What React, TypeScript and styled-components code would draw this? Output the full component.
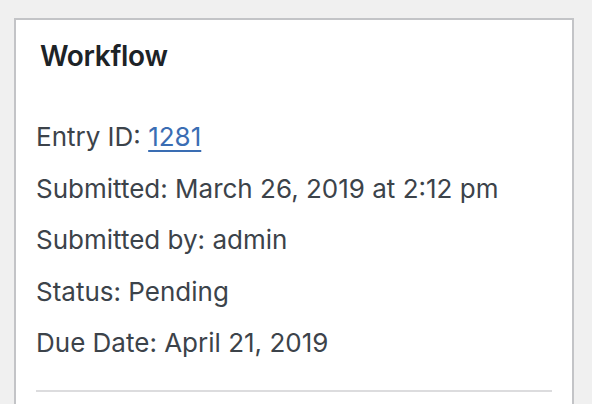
import React from 'react';
import styled, { createGlobalStyle } from 'styled-components';

const GlobalStyle = createGlobalStyle`
  html, body {
    margin: 0;
    padding: 0;
    background: #f0f0f0;
  }
  body {
    font-family: Inter, "Liberation Sans", sans-serif;
    -webkit-font-smoothing: antialiased;
  }
`;

const Page = styled.div`
  padding: 18px 18px 0 14px;
  height: 404px;
  box-sizing: border-box;
  overflow: hidden;
`;

const Postbox = styled.section`
  width: 560px;
  box-sizing: border-box;
  background: #fff;
  border: 2px solid #c3c4c7;
  border-bottom: none;
  height: 400px;
`;

const Heading = styled.h2`
  margin: 0;
  padding: 18px 24px 0;
  font-size: 28px;
  line-height: 36px;
  font-weight: 600;
  letter-spacing: -0.3px;
  color: #1d2327;
`;

const Inside = styled.div`
  padding: 43px 20px 0;
`;

const Details = styled.div`
  display: flex;
  flex-direction: column;
  gap: 11.5px;
`;

const Row = styled.p`
  margin: 0;
  font-size: 26px;
  line-height: 40px;
  color: #3c434a;
`;

const EntryLink = styled.a`
  color: #3a6db3;
  text-decoration: underline;
  text-underline-offset: 4px;
  text-decoration-thickness: 2px;
`;

const Divider = styled.hr`
  margin: 27px 0 0;
  border: none;
  border-top: 2px solid #dcdcde;
`;

const rows = [
  'Submitted: March 26, 2019 at 2:12 pm',
  'Submitted by: admin',
  'Status: Pending',
  'Due Date: April 21, 2019',
];

export default function App() {
  return (
    <>
      <GlobalStyle />
      <Page>
        <Postbox>
          <Heading>Workflow</Heading>
          <Inside>
            <Details>
              <Row>
                Entry ID: <EntryLink href="#">1281</EntryLink>
              </Row>
              {rows.map(text => (
                <Row key={text}>{text}</Row>
              ))}
            </Details>
            <Divider />
          </Inside>
        </Postbox>
      </Page>
    </>
  );
}
